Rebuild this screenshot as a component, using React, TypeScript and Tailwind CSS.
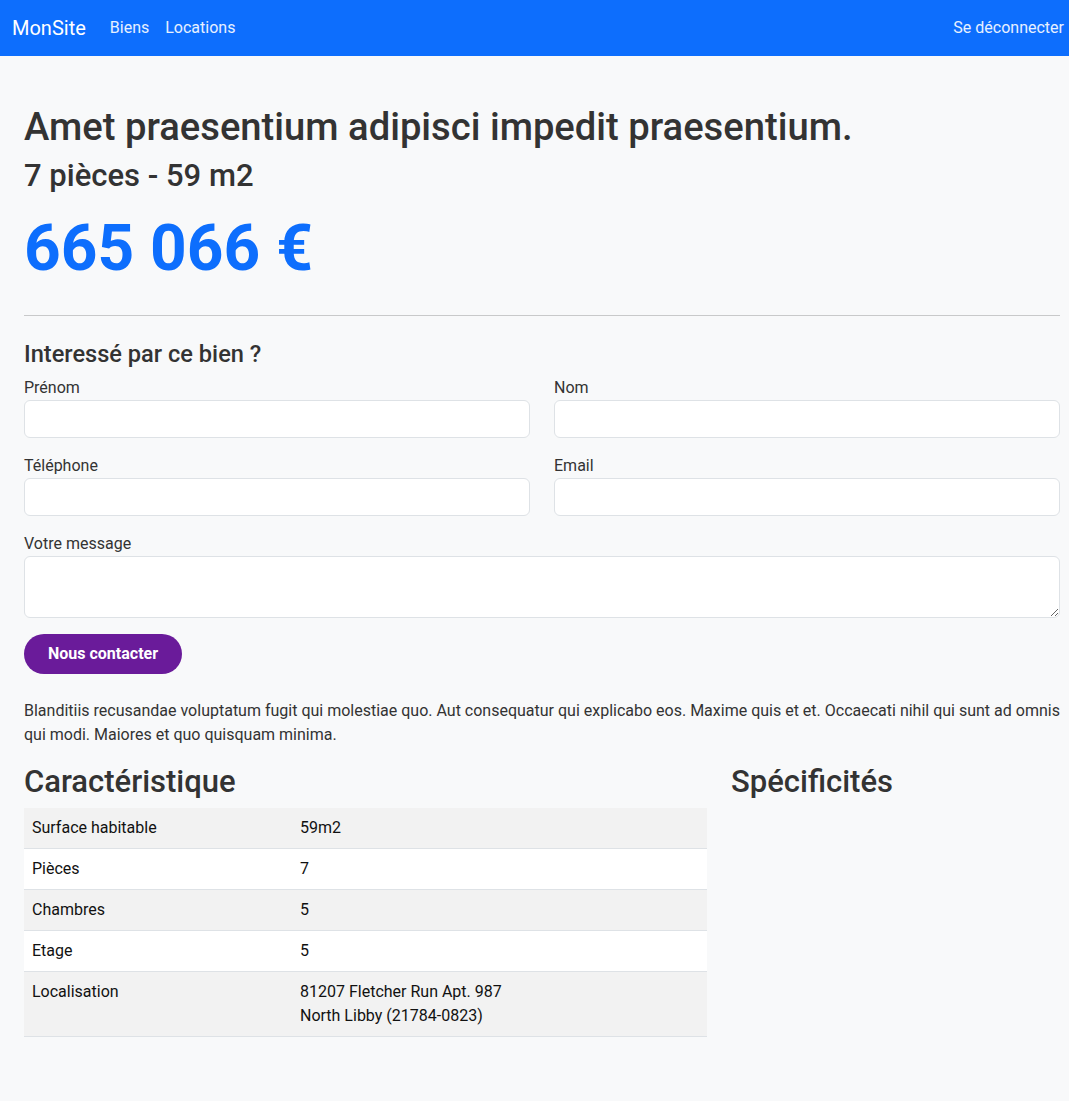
export default function App() {
  const rows: [string, React.ReactNode][] = [
    ["Surface habitable", "59m2"],
    ["Pièces", "7"],
    ["Chambres", "5"],
    ["Etage", "5"],
    [
      "Localisation",
      <>
        81207 Fletcher Run Apt. 987
        <br />
        North Libby (21784-0823)
      </>,
    ],
  ];

  return (
    <div className="min-h-[1101px] bg-[#f8f9fa] text-[#333] font-['Roboto',sans-serif]">
      {/* Navbar */}
      <nav className="h-14 bg-[#0d6efd] flex items-center pl-3 pr-[5px] text-white">
        <span className="text-[20px] mr-6">MonSite</span>
        <a className="text-base text-white/90 mr-4">Biens</a>
        <a className="text-base text-white/90">Locations</a>
        <a className="ml-auto text-base text-white/90">Se déconnecter</a>
      </nav>

      <main className="pl-6 pr-[9px] pt-[49px] pb-16">
        <h1 className="text-[38.2px] font-medium leading-[1.2]">Amet praesentium adipisci impedit praesentium.</h1>
        <h3 className="text-[31px] font-medium leading-[1.2] mt-[6px]">7 pièces - 59 m2</h3>
        <div className="text-[64px] font-bold leading-[1.2] text-[#0d6efd] mt-[17px]">665 066 €</div>

        <hr className="border-0 border-t border-[#c8c9ca] mt-[27px] mb-[24px]" />

        <h4 className="text-[23.6px] font-medium leading-[1.2] mb-[8px]">Interessé par ce bien ?</h4>

        <form className="flex flex-col">
          <div className="grid grid-cols-2 gap-x-6">
            <div>
              <label className="block text-base leading-[24px]">Prénom</label>
              <input className="w-full h-[38px] bg-white border border-[#dee2e6] rounded-md" />
            </div>
            <div>
              <label className="block text-base leading-[24px]">Nom</label>
              <input className="w-full h-[38px] bg-white border border-[#dee2e6] rounded-md" />
            </div>
          </div>
          <div className="grid grid-cols-2 gap-x-6 mt-[16px]">
            <div>
              <label className="block text-base leading-[24px]">Téléphone</label>
              <input className="w-full h-[38px] bg-white border border-[#dee2e6] rounded-md" />
            </div>
            <div>
              <label className="block text-base leading-[24px]">Email</label>
              <input className="w-full h-[38px] bg-white border border-[#dee2e6] rounded-md" />
            </div>
          </div>
          <div className="mt-[16px]">
            <label className="block text-base leading-[24px]">Votre message</label>
            <textarea className="block w-full h-[62px] bg-white border border-[#dee2e6] rounded-md" />
          </div>
          <div className="mt-[16px]">
            <button type="button" className="h-10 px-6 rounded-full bg-[#6a1b9a] text-white font-bold text-base">
              Nous contacter
            </button>
          </div>
        </form>

        <p className="text-base leading-6 mt-[25px]">
          Blanditiis recusandae voluptatum fugit qui molestiae quo. Aut consequatur qui explicabo eos. Maxime quis et et. Occaecati nihil qui sunt ad omnis qui modi. Maiores et quo quisquam minima.
        </p>

        <div className="flex gap-6 mt-[16px]">
          <div className="w-[683px]">
            <h2 className="text-[31px] font-medium leading-[1.2] mb-[8px]">Caractéristique</h2>
            <table className="w-full text-[16px] text-[#111]">
              <tbody>
                {rows.map(([k, v], i) => (
                  <tr key={k} className={`border-b border-[#dee2e6] ${i % 2 === 0 ? "bg-[#f2f2f2]" : "bg-white"}`}>
                    <td className="w-[268px] px-2 py-2 leading-6 align-top">{k}</td>
                    <td className="px-2 py-2 leading-6 align-top">{v}</td>
                  </tr>
                ))}
              </tbody>
            </table>
          </div>
          <div className="flex-1">
            <h2 className="text-[31px] font-medium leading-[1.2]">Spécificités</h2>
          </div>
        </div>
      </main>
    </div>
  );
}
